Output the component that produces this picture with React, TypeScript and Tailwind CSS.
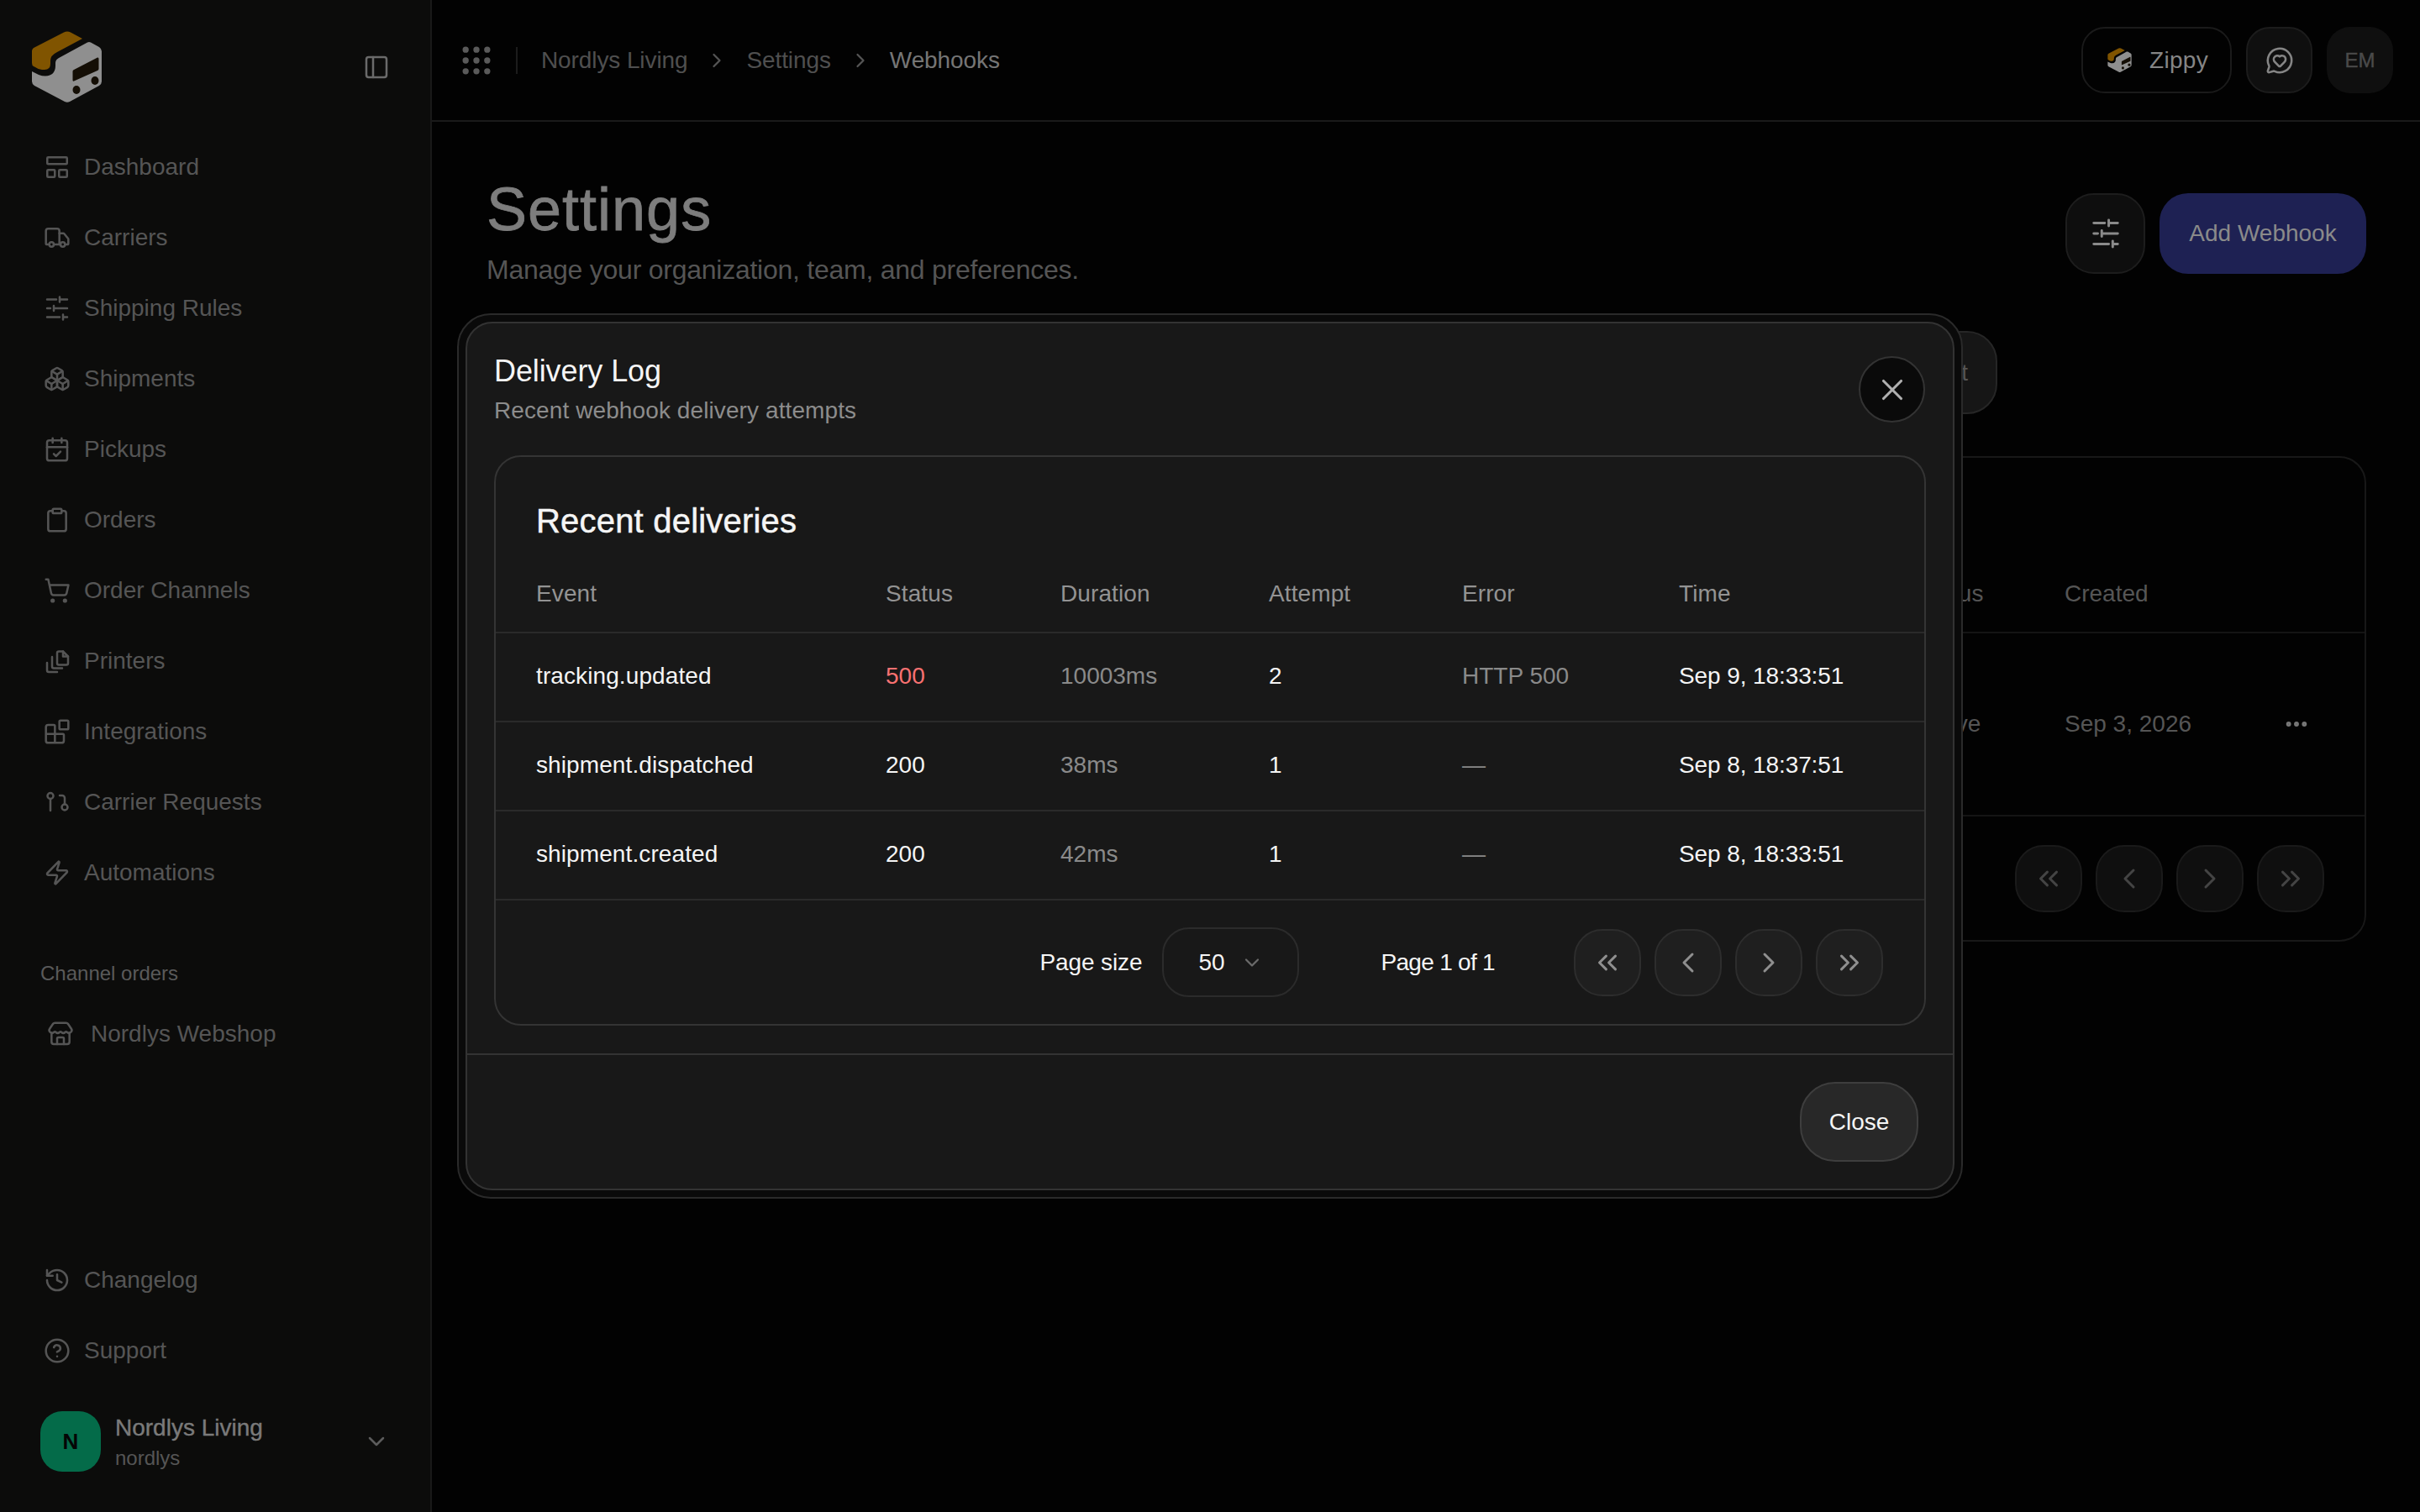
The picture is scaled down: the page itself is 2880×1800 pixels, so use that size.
import {
  Truck,
  Boxes,
  CalendarCheck,
  Clipboard,
  ShoppingCart,
  Blocks,
  Zap,
  History,
  CircleHelp,
  Store,
  PanelLeft,
  Grip,
  ChevronRight,
  ChevronDown,
  ChevronLeft,
  ChevronsLeft,
  ChevronsRight,
  MessageCircleHeart,
  Ellipsis,
  X,
} from 'lucide-react';
import React from 'react';

const Logo = ({ className }: { className: string }) => (
  <svg viewBox="38 37 83 85" className={className}>
    <path
      d="M76 38.5 a9 9 0 0 1 8 0 L98 46 L68 62 Q60 66 60 72 V76 Q60 83 53 83 H50 Q46 83 42 80 L40 79 Q38 78 38 75 V61 Q38 58 41 56.5 Z"
      fill="#805400"
    />
    <path
      d="M104 50.5 a4 4 0 0 1 4 0 L118 56 Q121 58 121 61 V97 Q121 100 118 102 L83 121 Q80 122.5 77 121 L41 102 Q38 100 38 97 V85 L46 89 Q50 90.5 54 90.5 Q66 90 66 78 V75 Q66 71 70 69 Z"
      fill="#8f8f8f"
    />
    <path d="M88 83 L116 68.5 Q117.5 68 117.5 70 V82 Q117.5 83.5 116 84 L88 96.5 Q86.5 97 86.5 95.5 V85 Q86.5 83.7 88 83 Z" fill="#140e05" />
    <ellipse cx="91" cy="107" rx="4.5" ry="5" fill="#140e05" />
    <ellipse cx="113" cy="96" rx="4.5" ry="5" fill="#140e05" />
  </svg>
);

const DashboardIcon = ({ className }: { className: string }) => (
  <svg viewBox="0 0 32 32" fill="none" stroke="currentColor" strokeWidth="2.5" strokeLinejoin="round" className={className}>
    <rect x="4.25" y="4.25" width="23.5" height="8" rx="1" />
    <rect x="4.25" y="19.25" width="9" height="8.5" rx="1" />
    <rect x="18.25" y="19.25" width="9.5" height="8.5" rx="1" />
  </svg>
);

const SlidersIcon = ({ className }: { className: string }) => (
  <svg viewBox="0 0 32 32" fill="none" stroke="currentColor" strokeWidth="2.5" strokeLinecap="round" className={className}>
    <path d="M4 5.5H15M19 2.5v6M19 5.5H28" />
    <path d="M4 16H8M12 13v6M12 16H28" />
    <path d="M4 26.5H19M23 23.5v6M23 26.5H28" />
  </svg>
);

const PrintersIcon = ({ className }: { className: string }) => (
  <svg viewBox="0 0 32 32" fill="none" stroke="currentColor" strokeWidth="2.5" strokeLinecap="round" strokeLinejoin="round" className={className}>
    <path d="M16 6.5a2 2 0 0 1 2-2h5l6 6v8a2 2 0 0 1-2 2H18a2 2 0 0 1-2-2z" />
    <path d="M23 4.5v6h6" />
    <path d="M10 11v11.5a2 2 0 0 0 2 2h10" />
    <path d="M4 18v9a2 2 0 0 0 2 2h10" />
  </svg>
);

const RequestsIcon = ({ className }: { className: string }) => (
  <svg viewBox="0 0 32 32" fill="none" stroke="currentColor" strokeWidth="2.5" strokeLinecap="round" className={className}>
    <circle cx="8" cy="8.5" r="3.5" />
    <path d="M8 12v14" />
    <path d="M19 8h3a3 3 0 0 1 3 3v7" />
    <circle cx="25" cy="22" r="3.5" />
  </svg>
);

const navItems = [
  { label: 'Dashboard', icon: <DashboardIcon className="w-8 h-8" /> },
  { label: 'Carriers', icon: <Truck size={32} strokeWidth={1.9} /> },
  { label: 'Shipping Rules', icon: <SlidersIcon className="w-8 h-8" /> },
  { label: 'Shipments', icon: <Boxes size={32} strokeWidth={1.9} /> },
  { label: 'Pickups', icon: <CalendarCheck size={32} strokeWidth={1.9} /> },
  { label: 'Orders', icon: <Clipboard size={32} strokeWidth={1.9} /> },
  { label: 'Order Channels', icon: <ShoppingCart size={32} strokeWidth={1.9} /> },
  { label: 'Printers', icon: <PrintersIcon className="w-8 h-8" /> },
  { label: 'Integrations', icon: <Blocks size={32} strokeWidth={1.9} /> },
  { label: 'Carrier Requests', icon: <RequestsIcon className="w-8 h-8" /> },
  { label: 'Automations', icon: <Zap size={32} strokeWidth={1.9} /> },
];

const deliveries = [
  { event: 'tracking.updated', status: '500', duration: '10003ms', attempt: '2', error: 'HTTP 500', time: 'Sep 9, 18:33:51' },
  { event: 'shipment.dispatched', status: '200', duration: '38ms', attempt: '1', error: '—', time: 'Sep 8, 18:37:51' },
  { event: 'shipment.created', status: '200', duration: '42ms', attempt: '1', error: '—', time: 'Sep 8, 18:33:51' },
];

const NavRow = ({ label, icon }: { label: string; icon: React.ReactNode }) => (
  <div className="flex h-[84px] items-center gap-4 pl-[52px] text-[28px] text-[#555555]">
    {icon}
    <span>{label}</span>
  </div>
);

// The four first/prev/next/last buttons, used by both tables
const PagerButtons = ({ className }: { className: string }) => (
  <>
    <div className={className}>
      <ChevronsLeft size={38} strokeWidth={1.9} />
    </div>
    <div className={className}>
      <ChevronLeft size={40} strokeWidth={1.8} />
    </div>
    <div className={className}>
      <ChevronRight size={40} strokeWidth={1.8} />
    </div>
    <div className={className}>
      <ChevronsRight size={38} strokeWidth={1.9} />
    </div>
  </>
);

const App = () => {
  return (
    <div className="relative flex h-[1800px] w-[2880px] overflow-hidden bg-[#020202] font-['Liberation_Sans',Arial,sans-serif]">
      {/* Sidebar */}
      <aside className="flex w-[514px] shrink-0 flex-col border-r-2 border-[#191919] bg-[#0c0c0b]">
        <div className="flex h-[157px] items-start justify-between pl-[38px] pr-[48px] pt-[37px]">
          <Logo className="h-[85px] w-[83px]" />
          <PanelLeft size={32} strokeWidth={1.9} className="mt-[27px] text-[#6a6a6a]" />
        </div>
        <nav>
          {navItems.map((item) => (
            <NavRow key={item.label} label={item.label} icon={item.icon} />
          ))}
        </nav>
        <div className="mt-[60px] pl-12 text-2xl leading-9 text-[#5a5a5a]">Channel orders</div>
        <div className="mt-[12px] flex h-[84px] items-center gap-[20px] pl-[56px] text-[28px] text-[#555555]">
          <Store size={32} strokeWidth={1.9} />
          <span>Nordlys Webshop</span>
        </div>
        <div className="mt-auto">
          <NavRow label="Changelog" icon={<History size={32} strokeWidth={1.9} />} />
          <NavRow label="Support" icon={<CircleHelp size={32} strokeWidth={1.9} />} />
          <div className="mt-[30px] mb-[48px] flex h-[72px] items-center pl-12 pr-[48px]">
            <div className="flex h-[72px] w-[72px] items-center justify-center rounded-[26px] bg-[#046b49] text-[26px] font-bold text-[#050505]">
              N
            </div>
            <div className="ml-[17px] flex flex-col pt-[4px]">
              <span className="text-[28px] leading-9 text-[#7a7a7a] [-webkit-text-stroke:0.4px_#7a7a7a]">Nordlys Living</span>
              <span className="text-2xl leading-9 text-[#555555]">nordlys</span>
            </div>
            <ChevronDown size={32} strokeWidth={1.9} className="ml-auto text-[#5c5c5c]" />
          </div>
        </div>
      </aside>

      {/* Main */}
      <main className="flex min-w-0 flex-1 flex-col">
        <header className="flex h-[145px] shrink-0 items-center justify-between border-b-2 border-[#1a1a1a] pl-[31px] pr-[32px]">
          <div className="flex items-center text-[28px] tracking-[-0.1px] text-[#4f4f4f]">
            <Grip size={44} strokeWidth={2} className="text-[#5a5a5a]" />
            <div className="ml-[25px] mr-[28px] h-[32px] w-[2px] bg-[#1c1c1c]" />
            <span>Nordlys Living</span>
            <ChevronRight size={28} strokeWidth={1.9} className="mx-[21px] text-[#555555]" />
            <span>Settings</span>
            <ChevronRight size={28} strokeWidth={1.9} className="mx-[21px] text-[#555555]" />
            <span className="text-[#757575]">Webhooks</span>
          </div>
          <div className="flex items-center gap-[17px]">
            <div className="flex h-[79px] w-[179px] items-center gap-[21px] rounded-[28px] border-2 border-[#1a1a1a] pl-[29px] text-[28px] tracking-[0.3px] text-[#858585]">
              <Logo className="h-[29px] w-[29px]" />
              <span>Zippy</span>
            </div>
            <div className="flex h-[79px] w-[79px] items-center justify-center rounded-[28px] border-2 border-[#1c1c1c] bg-[#0f0f0f] text-[#858585]">
              <MessageCircleHeart size={34} strokeWidth={1.8} />
            </div>
            <div className="flex h-[79px] w-[79px] items-center justify-center rounded-[28px] bg-[#0f0f0f] text-2xl text-[#4a4a4a] [-webkit-text-stroke:0.4px_#4a4a4a]">
              EM
            </div>
          </div>
        </header>

        <div className="flex flex-1 flex-col pl-[65px] pr-[64px]">
          <div className="mt-[64px] flex items-start justify-between">
            <div>
              <h1 className="text-[72px] leading-[80px] tracking-[1px] text-[#7d7d7d] [-webkit-text-stroke:0.8px_#7d7d7d]">Settings</h1>
              <p className="mt-[10px] text-[32px] leading-[44px] tracking-[-0.25px] text-[#555555]">Manage your organization, team, and preferences.</p>
            </div>
            <div className="mt-[21px] flex items-center gap-[17px]">
              <div className="flex h-[96px] w-[95px] items-center justify-center rounded-[34px] border-2 border-[#1d1d1d] bg-[#0e0e0e] text-[#8a8a8a]">
                <SlidersIcon className="h-[38px] w-[38px]" />
              </div>
              <div className="flex h-[96px] w-[246px] items-center justify-center rounded-[34px] bg-[#1e2153] text-[28px] text-[#8a8a8a]">
                Add Webhook
              </div>
            </div>
          </div>

          <div className="mt-[51px] flex">
            <div className="ml-[1498px] flex h-[99px] w-[300px] items-center justify-end rounded-[36px] border-2 border-[#262626] bg-[#161616] pr-[33px] text-[28px] text-[#555555]">
              Export
            </div>
          </div>

          <div className="mt-[50px] h-[578px] rounded-[32px] border-2 border-[#181818] text-[28px] text-[#555555]">
            <div className="h-[116px]" />
            <div className="grid h-[93px] grid-cols-[1700px_176px_260px_1fr] items-center border-b-2 border-[#141414]">
              <span className="col-start-2">Status</span>
              <span>Created</span>
            </div>
            <div className="grid h-[218px] grid-cols-[1700px_176px_260px_1fr] items-center border-b-2 border-[#141414]">
              <span className="col-start-2">Active</span>
              <span>Sep 3, 2026</span>
              <Ellipsis size={32} strokeWidth={2.4} className="text-[#777777]" />
            </div>
            <div className="flex h-[147px] items-center justify-end gap-4 pr-[48px] text-[#444444]">
              <PagerButtons className="flex h-20 w-20 items-center justify-center rounded-[34px] border-2 border-[#1a1a1a] bg-[#0f0f0f]" />
            </div>
          </div>
        </div>
      </main>

      {/* Delivery log dialog */}
      <div className="absolute left-[544px] top-[373px] h-[1054px] w-[1792px] rounded-[40px] border-2 border-[#2a2a2a] bg-[#0a0a0a] p-2">
        <div className="relative flex h-full flex-col rounded-[32px] border-2 border-[#333333] bg-[#181818]">
          <div className="flex h-[157px] shrink-0 items-start justify-between pl-[32px] pr-[33px] pt-[37px]">
            <div>
              <h2 className="text-[36px] leading-10 tracking-[-0.1px] text-[#f5f5f5]">Delivery Log</h2>
              <p className="mt-[7px] text-[28px] leading-10 tracking-[0.1px] text-[#8c8c8c]">Recent webhook delivery attempts</p>
            </div>
            <button className="mt-[2px] flex h-[79px] w-[79px] items-center justify-center rounded-full border-2 border-[#333333] bg-[#0a0a0a] text-[#b0b0b0]">
              <X size={42} strokeWidth={1.8} />
            </button>
          </div>

          <div className="mx-[32px] h-[679px] shrink-0 rounded-[32px] border-2 border-[#343434]">
            <div className="h-[117px] pl-[48px] pt-[52px] text-[40px] leading-[48px] tracking-[0.2px] text-[#f5f5f5] [-webkit-text-stroke:0.5px_#f5f5f5]">
              Recent deliveries
            </div>
            <div className="grid h-[93px] grid-cols-[416px_208px_248px_230px_258px_1fr] items-center border-b-2 border-[#2a2a2a] pl-[48px] text-[28px] tracking-[0.1px] text-[#939393]">
              <span>Event</span>
              <span>Status</span>
              <span>Duration</span>
              <span>Attempt</span>
              <span>Error</span>
              <span>Time</span>
            </div>
            {deliveries.map((row) => (
              <div key={row.event} className="grid h-[106px] grid-cols-[416px_208px_248px_230px_258px_1fr] items-center border-b-2 border-[#2a2a2a] pb-[2px] pl-[48px] text-[28px] text-[#f5f5f5]">
                <span className="tracking-[0.1px]">{row.event}</span>
                <span className={row.status === '500' ? 'text-[#f87171]' : ''}>{row.status}</span>
                <span className="text-[#8a8a8a]">{row.duration}</span>
                <span>{row.attempt}</span>
                <span className="text-[#8a8a8a]">{row.error}</span>
                <span className="tracking-[-0.1px]">{row.time}</span>
              </div>
            ))}
            <div className="flex h-[147px] items-center justify-end pr-[49px] text-[28px] text-[#f5f5f5]">
              <span className="tracking-[-0.1px]">Page size</span>
              <div className="ml-[24px] flex h-[83px] w-[163px] items-center rounded-[32px] border-2 border-[#2b2b2b] pl-[41px]">
                <span>50</span>
                <ChevronDown size={28} strokeWidth={1.9} className="ml-[18px] text-[#6b6b6b]" />
              </div>
              <span className="ml-[97px] mr-[94px] tracking-[-0.7px]">Page 1 of 1</span>
              <div className="flex gap-4 text-[#8f8f8f]">
                <PagerButtons className="flex h-20 w-20 items-center justify-center rounded-[34px] border-2 border-[#2d2d2d] bg-[#1f1f1f]" />
              </div>
            </div>
          </div>

          <div className="mt-[33px] flex flex-1 items-start justify-end border-t-2 border-[#333333] pr-[41px] pt-8">
            <button className="h-[95px] w-[141px] rounded-[42px] border-2 border-[#3e3e3e] bg-[#282828] text-[28px] text-[#f5f5f5]">
              Close
            </button>
          </div>
        </div>
      </div>
    </div>
  );
};

export default App;
